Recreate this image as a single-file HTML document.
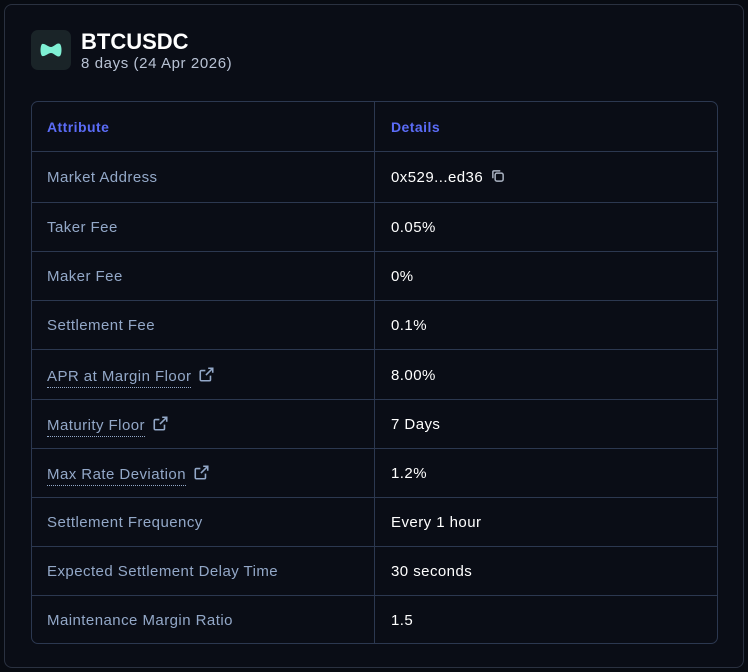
<!DOCTYPE html>
<html><head><style>
body{margin:0;width:748px;height:672px;background:#080b12;font-family:"Liberation Sans",sans-serif;overflow:hidden;position:relative}
.card{position:absolute;left:4px;top:4px;width:738px;height:662px;border:1px solid #2a3140;border-radius:8px;background:#0a0d16}
.logo{position:absolute;left:26px;top:25px;width:40px;height:40px;border-radius:7px;background:#1a2428}
.title{position:absolute;left:76px;top:24px;color:#fff;font-size:22px;font-weight:bold}
.sub{position:absolute;left:76px;top:50px;color:#b8c2d4;font-size:15px;letter-spacing:0.6px}
.tbl{position:absolute;left:26px;top:96px;width:685px;height:541px;border:1px solid #2c3850;border-radius:7px;overflow:hidden}
.row{position:absolute;left:0;width:685px;border-top:1px solid #2c3850;display:flex;align-items:center;font-size:15px;letter-spacing:0.45px}
.row .a{position:absolute;left:15px;color:#93a8c8}
.row .d{position:absolute;left:359px;color:#fff}
.sep{position:absolute;left:342px;top:0;bottom:0;width:1px;background:#2c3850}
.u{border-bottom:1.5px dotted #93a8c8;padding-bottom:2px}
svg{vertical-align:-2px;margin-left:7px}
</style></head><body>
<div class="card">
<div class="logo"><svg width="40" height="40" viewBox="0 0 40 40" style="margin:0"><path d="M11 14c3-1 6 3 9 3s6-5 9-3c2 2 2 10 0 12c-3 2-6-3-9-3s-6 4-9 3c-2-2-2-10 0-12z" fill="#7ff0d4"/></svg></div>
<div class="title">BTCUSDC</div>
<div class="sub">8 days (24 Apr 2026)</div>
<div class="tbl">
<div class="sep"></div>
<div class="row" style="top:0;height:49px;border-top:none"><span class="a" style="color:#5b6cf7;font-weight:bold;font-size:14px">Attribute</span><span class="d" style="color:#5b6cf7;font-weight:bold;font-size:14px">Details</span></div>
<div class="row" style="top:49px;height:50px"><span class="a">Market Address</span><span class="d">0x529...ed36<svg width="16" height="16" viewBox="0 0 14 14" fill="none" stroke="#aab3c2" stroke-width="1.3"><rect x="4.5" y="4.5" width="7" height="7" rx="1.5"/><path d="M2.5 9V3.5a1 1 0 0 1 1-1H9"/></svg></span></div>
<div class="row" style="top:100px;height:49px"><span class="a">Taker Fee</span><span class="d">0.05%</span></div>
<div class="row" style="top:149px;height:49px"><span class="a">Maker Fee</span><span class="d">0%</span></div>
<div class="row" style="top:198px;height:49px"><span class="a">Settlement Fee</span><span class="d">0.1%</span></div>
<div class="row" style="top:247px;height:50px"><span class="a"><span class="u">APR at Margin Floor</span><svg width="17" height="17" viewBox="0 0 15 15" fill="none" stroke="#93a8c8" stroke-width="1.4"><path d="M11 8.5V12a1 1 0 0 1-1 1H3a1 1 0 0 1-1-1V5a1 1 0 0 1 1-1h3.5M9 2h4v4M13 2L7 8"/></svg></span><span class="d">8.00%</span></div>
<div class="row" style="top:297px;height:49px"><span class="a"><span class="u">Maturity Floor</span><svg width="17" height="17" viewBox="0 0 15 15" fill="none" stroke="#93a8c8" stroke-width="1.4"><path d="M11 8.5V12a1 1 0 0 1-1 1H3a1 1 0 0 1-1-1V5a1 1 0 0 1 1-1h3.5M9 2h4v4M13 2L7 8"/></svg></span><span class="d">7 Days</span></div>
<div class="row" style="top:346px;height:49px"><span class="a"><span class="u">Max Rate Deviation</span><svg width="17" height="17" viewBox="0 0 15 15" fill="none" stroke="#93a8c8" stroke-width="1.4"><path d="M11 8.5V12a1 1 0 0 1-1 1H3a1 1 0 0 1-1-1V5a1 1 0 0 1 1-1h3.5M9 2h4v4M13 2L7 8"/></svg></span><span class="d">1.2%</span></div>
<div class="row" style="top:395px;height:49px"><span class="a">Settlement Frequency</span><span class="d">Every 1 hour</span></div>
<div class="row" style="top:444px;height:49px"><span class="a">Expected Settlement Delay Time</span><span class="d">30 seconds</span></div>
<div class="row" style="top:493px;height:48px"><span class="a">Maintenance Margin Ratio</span><span class="d">1.5</span></div>
</div>
</div>
</body></html>
